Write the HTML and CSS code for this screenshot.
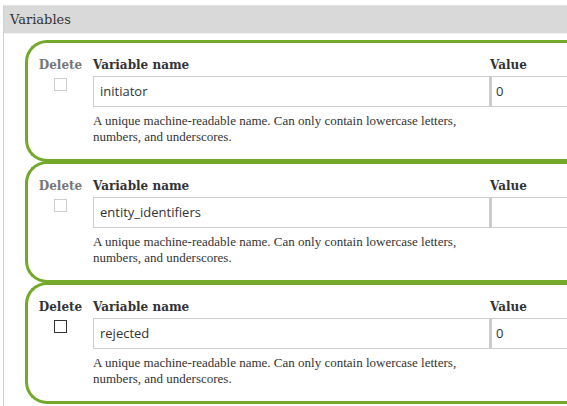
FILE: index.html
```html
<!DOCTYPE html>
<html lang="en">
<head>
  <meta charset="UTF-8">
  <title>Variables</title>
  <link rel="stylesheet" href="styles.css">
</head>
<body>
  <div class="fieldset">
    <div class="legend">Variables</div>
    <div class="items">
      <div class="item">
        <div class="col col-delete">
          <div class="head disabled">Delete</div>
          <span class="check disabled"></span>
        </div>
        <div class="col col-name">
          <div class="head">Variable name</div>
          <div class="input">initiator</div>
          <div class="desc">A unique machine-readable name. Can only contain lowercase letters, numbers, and underscores.</div>
        </div>
        <div class="col col-value">
          <div class="head">Value</div>
          <div class="input value">0</div>
        </div>
      </div>
      <div class="item">
        <div class="col col-delete">
          <div class="head disabled">Delete</div>
          <span class="check disabled"></span>
        </div>
        <div class="col col-name">
          <div class="head">Variable name</div>
          <div class="input">entity_identifiers</div>
          <div class="desc">A unique machine-readable name. Can only contain lowercase letters, numbers, and underscores.</div>
        </div>
        <div class="col col-value">
          <div class="head">Value</div>
          <div class="input value"></div>
        </div>
      </div>
      <div class="item">
        <div class="col col-delete">
          <div class="head">Delete</div>
          <span class="check"></span>
        </div>
        <div class="col col-name">
          <div class="head">Variable name</div>
          <div class="input">rejected</div>
          <div class="desc">A unique machine-readable name. Can only contain lowercase letters, numbers, and underscores.</div>
        </div>
        <div class="col col-value">
          <div class="head">Value</div>
          <div class="input value">0</div>
        </div>
      </div>
    </div>
  </div>
</body>
</html>
```

FILE: styles.css
```css
body {
  margin: 0;
  overflow: hidden;
  background: #fff;
  font-family: "DejaVu Serif", Georgia, serif;
  color: #333;
}
.fieldset {
  margin: 5px 0 0 3px;
  border-left: 1px solid #d0d0d0;
  border-top: 1px solid #e4e4e4;
  height: 420px;
}
.legend {
  background: #d9d9d9;
  height: 27px;
  line-height: 27px;
  padding-left: 6px;
  font-size: 13px;
  color: #333;
  border-bottom: 1px solid #f2f2f2;
}
.items {
  padding: 6px 0 0 21px;
  margin-right: -60px;
}
.item {
  display: flex;
  border: 3px solid #74a829;
  border-right: none;
  border-radius: 22px 0 0 22px;
  padding: 14px 0 0;
  height: 102px;
  margin-bottom: -1px;
}
.col-delete {
  width: 65px;
  text-align: center;
}
.col-name {
  width: 397px;
}
.col-value {
  flex: 1;
}
.head {
  font-size: 12px;
  font-weight: bold;
  height: 19px;
  line-height: 16px;
}
.head.disabled {
  color: #777;
}
.check {
  display: inline-block;
  width: 11px;
  height: 11px;
  border: 1px solid #333;
  margin-top: 1px;
}
.check.disabled {
  border-color: #ccc;
}
.input {
  box-sizing: border-box;
  height: 31px;
  border: 1px solid #ccc;
  padding: 0 6px;
  font-family: "Open Sans", sans-serif;
  font-size: 13px;
  line-height: 29px;
  color: #333;
}
.input.value {
  border-left-width: 2px;
  border-right: none;
  padding-left: 4px;
}
.desc {
  font-family: "Liberation Serif", "Times New Roman", serif;
  font-size: 13px;
  line-height: 16px;
  margin-top: 6px;
  color: #333;
}
```
